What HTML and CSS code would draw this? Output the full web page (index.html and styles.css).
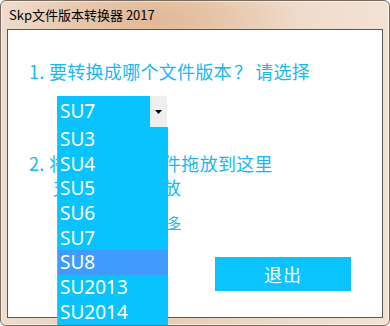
FILE: index.html
```html
<!DOCTYPE html>
<html lang="zh-CN">
<head>
<meta charset="utf-8">
<title>Skp文件版本转换器 2017</title>
<link rel="stylesheet" href="styles.css">
</head>
<body>
<div class="window">
  <div class="titlebar">Skp文件版本转换器 2017</div>
  <div class="panel">
    <div class="step step1">1. 要转换成哪个文件版本<span class="q">？</span>请选择</div>
    <div class="select-row">
      <div class="select">
        <span class="select-value">SU7</span>
        <span class="select-arrow"><svg width="7" height="4" viewBox="0 0 7 4"><path d="M0 0H7L3.5 4Z" fill="#000"/></svg></span>
      </div>
    </div>
    <div class="step step2">
      <div>2. 将要转换的 文件拖放到这里</div>
      <div class="indent">支持多文件拖放</div>
    </div>
    <div class="step3"><a class="more" href="#">访问官网了解更多</a></div>
    <div class="actions"><button class="exit">退出</button></div>
    <ul class="dropdown">
      <li>SU3</li>
      <li>SU4</li>
      <li>SU5</li>
      <li>SU6</li>
      <li>SU7</li>
      <li class="active">SU8</li>
      <li>SU2013</li>
      <li>SU2014</li>
    </ul>
  </div>
</div>
</body>
</html>
```
FILE: styles.css
```css
html, body {
  margin: 0;
  padding: 0;
  width: 390px;
  height: 326px;
  overflow: hidden;
  background: #ffffff;
}

.window {
  box-sizing: border-box;
  width: 390px;
  height: 326px;
  border: 1px solid #7b6a5e;
  border-radius: 6px;
  background:
    radial-gradient(ellipse 150px 40px at 150px 18px, rgba(222, 178, 140, 0.75), rgba(222, 178, 140, 0) 100%),
    linear-gradient(90deg, #efdccd 0%, #e8cbb2 40%, #eed9c7 70%, #f2e3d6 100%);
  box-shadow: inset 0 0 0 1px rgba(255, 255, 255, 0.5);
  display: flex;
  flex-direction: column;
  font-family: "Noto Sans", "Noto Sans CJK SC", sans-serif;
}

.titlebar {
  height: 28px;
  padding-left: 8px;
  font-family: "Noto Sans CJK SC", sans-serif;
  font-size: 13px;
  line-height: 27px;
  color: #000;
}

.panel {
  position: relative;
  box-sizing: border-box;
  margin: 0 6px 0 6px;
  height: 289px;
  background: #ffffff;
  border: 1px solid #5e5650;
  display: flex;
  flex-direction: column;
}

.step {
  font-family: "Noto Sans CJK SC", sans-serif;
  font-size: 18px;
  line-height: 24px;
  color: #1ab7f1;
  letter-spacing: 0.3px;
  padding-left: 21px;
}

.step1 {
  margin-top: 29px;
}

.q {
  margin: 0 3px 0 2px;
}

.select-row {
  margin-top: 13px;
  padding-left: 49px;
  display: flex;
}

.select {
  display: flex;
  height: 31px;
}

.select-value {
  width: 93px;
  background: #09c3fe;
  color: #fff;
  font-size: 19px;
  line-height: 31px;
  padding-left: 3px;
  box-sizing: border-box;
}

.select-arrow {
  width: 17px;
  background: #efefef;
  display: flex;
  align-items: center;
  justify-content: center;
}

.step2 {
  margin-top: 24px;
}

.step2 .indent {
  padding-left: 24px;
}

.step3 {
  margin-top: 14px;
  padding-left: 61px;
  font-family: "Noto Sans CJK SC", sans-serif;
  font-size: 14px;
  line-height: 18px;
}

.more {
  color: #1ab7f1;
  text-decoration: underline;
}

.actions {
  margin-top: 26px;
  padding-left: 207px;
  display: flex;
}

.exit {
  width: 136px;
  height: 34px;
  border: none;
  margin: 0;
  padding: 0;
  background: #0bc3ff;
  color: #fff;
  font-family: "Noto Sans CJK SC", sans-serif;
  font-size: 18px;
  line-height: 34px;
  letter-spacing: 1px;
}

.dropdown {
  position: absolute;
  left: 49px;
  top: 97px;
  width: 111px;
  margin: 0;
  padding: 0;
  list-style: none;
  background: #09c3fe;
  border-left: 1px solid #9aa3a8;
  box-sizing: border-box;
}

.dropdown li {
  height: 24.7px;
  line-height: 25px;
  padding-left: 2px;
  color: #fff;
  font-size: 19px;
}

.dropdown li.active {
  background: #3f9cfd;
}
```
